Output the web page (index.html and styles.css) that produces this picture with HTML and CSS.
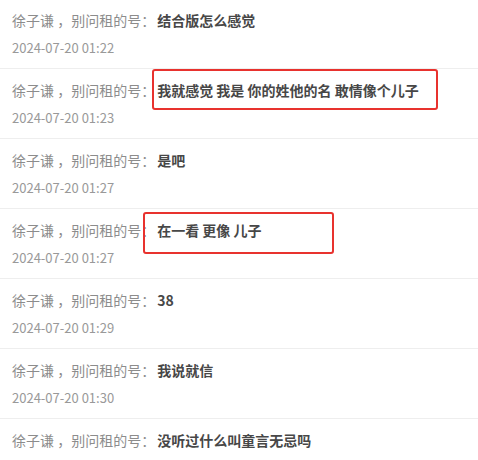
FILE: index.html
```html
<!DOCTYPE html>
<html lang="zh">

<head>
    <meta charset="UTF-8" />
    <meta name="viewport" content="width=device-width, initial-scale=1.0" />
    <title>留言记录</title>
    <link rel="stylesheet" href="styles.css">
</head>

<body>
    <div class="list">
        <div class="item">
            <p class="line"><span class="who">徐子谦 ，别问租的号：</span><span class="msg">结合版怎么感觉</span></p>
            <p class="time">2024-07-20 01:22</p>
        </div>
        <div class="item">
            <p class="line"><span class="who">徐子谦 ，别问租的号：</span><span class="msg">我就感觉 我是 你的姓他的名 敢情像个儿子</span></p>
            <p class="time">2024-07-20 01:23</p>
            <div class="mark mark-1"></div>
        </div>
        <div class="item">
            <p class="line"><span class="who">徐子谦 ，别问租的号：</span><span class="msg">是吧</span></p>
            <p class="time">2024-07-20 01:27</p>
        </div>
        <div class="item">
            <p class="line"><span class="who">徐子谦 ，别问租的号：</span><span class="msg">在一看 更像 儿子</span></p>
            <p class="time">2024-07-20 01:27</p>
            <div class="mark mark-2"></div>
        </div>
        <div class="item">
            <p class="line"><span class="who">徐子谦 ，别问租的号：</span><span class="msg">38</span></p>
            <p class="time">2024-07-20 01:29</p>
        </div>
        <div class="item">
            <p class="line"><span class="who">徐子谦 ，别问租的号：</span><span class="msg">我说就信</span></p>
            <p class="time">2024-07-20 01:30</p>
        </div>
        <div class="item last">
            <p class="line"><span class="who">徐子谦 ，别问租的号：</span><span class="msg">没听过什么叫童言无忌吗</span></p>
        </div>
    </div>
</body>

</html>
```

FILE: styles.css
```css
* {
    box-sizing: border-box;
}

body {
    margin: 0;
    background: #fff;
    font-family: "Microsoft YaHei", "Noto Sans CJK SC", "Noto Sans", sans-serif;
    overflow: hidden;
}

.list {
    margin-top: -1px;
}

.item {
    position: relative;
    padding: 11px 12px 10px;
    border-bottom: 1px solid #eeeeee;
}

.item.last {
    border-bottom: none;
}

.line {
    margin: 0;
    font-size: 14px;
    line-height: 20px;
    white-space: nowrap;
}

.who {
    color: #8c8c8c;
}

.msg {
    margin-left: 2px;
    color: #474747;
    font-weight: bold;
}

.time {
    margin: 8px 0 0;
    font-size: 13px;
    line-height: 20px;
    color: #999999;
}

/* red highlight boxes drawn over the text */
.mark {
    position: absolute;
    border: 2px solid #e8322e;
    border-radius: 3px;
}

.mark-1 {
    left: 152px;
    top: 0;
    width: 286px;
    height: 41px;
}

.mark-2 {
    left: 143px;
    top: 3px;
    width: 191px;
    height: 42px;
}
```
